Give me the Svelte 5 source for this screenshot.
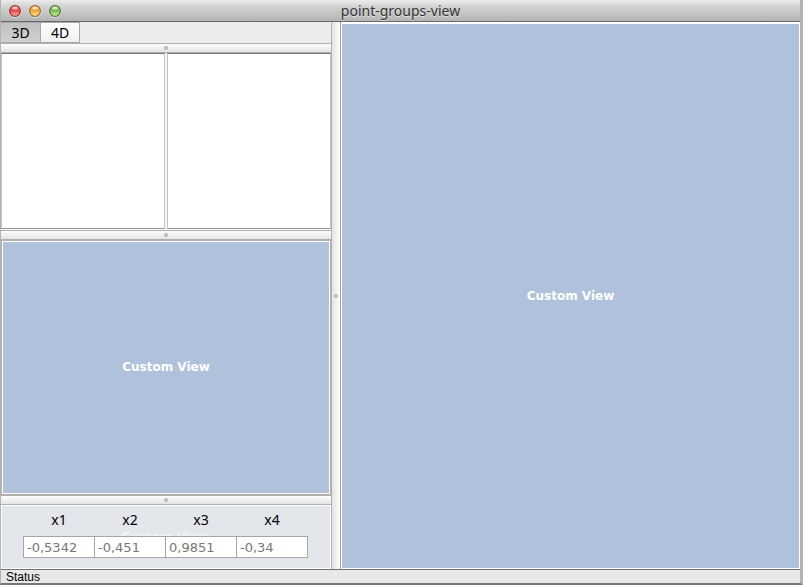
<script>
  let tab = $state('3D');
  const tabs = ['3D', '4D'];
  let coords = $state([
    { name: 'x1', value: '-0,5342' },
    { name: 'x2', value: '-0,451' },
    { name: 'x3', value: '0,9851' },
    { name: 'x4', value: '-0,34' }
  ]);
  const lights = [
    { name: 'Close', rim: '#8c3431', top: '#f58b8b', mid: '#e2484b', low: '#ffb0a8' },
    { name: 'Minimize', rim: '#93652a', top: '#f6c076', mid: '#eba23b', low: '#fff09a' },
    { name: 'Zoom', rim: '#4b7433', top: '#a9d28e', mid: '#78b857', low: '#d5f5ac' }
  ];
</script>

<div class="window">
  <header>
    <div class="lights">
      {#each lights as l, i}
        <button aria-label={l.name}>
          <svg width="14" height="14" viewBox="0 0 14 14">
            <defs>
              <linearGradient id="light{i}" x1="0" y1="0" x2="0" y2="1">
                <stop offset="0" stop-color={l.top} />
                <stop offset="0.45" stop-color={l.mid} />
                <stop offset="1" stop-color={l.low} />
              </linearGradient>
            </defs>
            <circle cx="7" cy="7.6" r="6" fill="none" stroke="#eee" stroke-opacity=".7" />
            <circle cx="7" cy="7" r="5.4" fill="url(#light{i})" stroke={l.rim} stroke-width="1.1" />
            <ellipse cx="7" cy="4" rx="2.8" ry="1.6" fill="#fff" fill-opacity=".6" />
          </svg>
        </button>
      {/each}
    </div>
    <h1>point-groups-view</h1>
  </header>

  <main>
    <section class="side">
      <nav>
        {#each tabs as t}
          <button class="tab" class:active={tab === t} aria-pressed={tab === t} onclick={() => (tab = t)}>{t}</button>
        {/each}
      </nav>
      <div class="bar"><i></i></div>
      <div class="lists">
        <div class="list"></div>
        <div class="gap"></div>
        <div class="list"></div>
      </div>
      <div class="bar"><i></i></div>
      <div class="custom small"><span>Custom View</span></div>
      <div class="bar"><i></i></div>
      <form>
        <span class="ghost" aria-hidden="true">Custom View</span>
        <div class="fields">
          {#each coords as c}
            <div class="field">
              <label for={c.name}>{c.name}</label>
              <input id={c.name} type="text" bind:value={c.value} />
            </div>
          {/each}
        </div>
      </form>
    </section>
    <div class="column"><i></i></div>
    <section class="custom large"><span>Custom View</span></section>
  </main>

  <footer>Status</footer>
</div>

<style>
  :global(body) {
    background: #777;
  }
  .window,
  .window * {
    box-sizing: border-box;
  }
  .window {
    display: flex;
    flex-direction: column;
    min-height: 100vh;
    border: solid #b3b3b3;
    border-width: 0 3px 0 1px;
    border-bottom: 2px solid #777;
    background: #ececec;
    font-family: 'DejaVu Sans', sans-serif;
    font-size: 13px;
    color: #000;
  }
  button {
    font: inherit;
    color: inherit;
  }
  header {
    display: grid;
    grid-template-columns: 1fr auto 1fr;
    align-items: center;
    height: 22px;
    border-bottom: 1px solid #696969;
    background: linear-gradient(#ececec, #d3d3d3 30%, #b4b4b4);
  }
  .lights {
    display: flex;
    gap: 6px;
    padding-left: 7px;
  }
  .lights button {
    display: block;
    width: 14px;
    height: 14px;
    padding: 0;
    border: 0;
    background: none;
  }
  .lights svg {
    display: block;
  }
  h1 {
    margin: 0;
    font: 14px/20px 'Noto Sans', sans-serif;
    color: #333;
    text-shadow: 0 1px 0 #e4e4e4;
  }
  main {
    flex: 1;
    display: grid;
    grid-template-columns: 330fr 10px 459fr;
  }
  .side {
    display: flex;
    flex-direction: column;
    min-width: 0;
  }
  nav {
    display: flex;
    height: 21px;
  }
  .tab {
    width: 39px;
    padding: 0;
    border: 1px solid #a9a9a9;
    border-left: 0;
    background: linear-gradient(#fff, #f0f0f0);
    font: 14px/19px 'Noto Sans', sans-serif;
  }
  .tab.active {
    width: 40px;
    background: linear-gradient(#c0c0c0, #d0d0d0);
  }
  .bar {
    display: flex;
    align-items: center;
    justify-content: center;
    height: 10px;
    border: solid #b0b0b0;
    border-width: 1px 0;
    background: linear-gradient(#fdfdfd, #e4e4e4);
  }
  .column {
    display: flex;
    align-items: center;
    justify-content: center;
    border-left: 1px solid #b0b0b0;
    border-right: 1px solid #a0a0a0;
    background: linear-gradient(90deg, #e4e4e4, #fdfdfd);
  }
  i {
    width: 4px;
    height: 4px;
    border: 1px solid #a8a8a8;
    border-radius: 50%;
    background: #d4d4d4;
  }
  .lists {
    flex: 177 1 0;
    display: flex;
    padding-bottom: 1px;
    background: #fff;
  }
  .list {
    flex: 1;
    border: 1px solid #909090;
    border-top-color: #777;
    border-left-color: #c4c4c4;
    border-right-color: #c4c4c4;
    background: #fff;
  }
  .gap {
    width: 2px;
    background: #f4f4f4;
  }
  .custom {
    display: flex;
    align-items: center;
    justify-content: center;
    background: #b0c1dc;
    color: #fff;
    font: bold 12px/16px 'DejaVu Sans', sans-serif;
  }
  .small {
    flex: 255 1 0;
    border: 1px solid #b0b0b0;
    outline: 1px solid #fff;
    outline-offset: -2px;
  }
  .large {
    border: 1px solid #fff;
    border-top-width: 2px;
  }
  form {
    position: relative;
    padding: 7px 22px 11px;
    border-right: 1px solid #b0b0b0;
    outline: 1px solid #fff;
    outline-offset: -1px;
    background: #e3e6eb;
  }
  .ghost {
    position: absolute;
    inset: 24px 0 auto;
    text-align: center;
    color: #f2f4f7;
    font: bold 12px/16px 'DejaVu Sans', sans-serif;
  }
  .fields {
    position: relative;
    display: flex;
  }
  .field {
    flex: 1;
    min-width: 0;
    display: flex;
    flex-direction: column;
    gap: 8px;
    text-align: center;
  }
  .field + .field {
    margin-left: -1px;
  }
  label {
    font: 14px/16px 'Noto Sans', sans-serif;
  }
  input {
    width: 100%;
    height: 22px;
    padding: 0 3px;
    border: 1px solid #a6a6a6;
    border-radius: 0;
    background: #fff;
    color: #777;
    font: 13px/20px 'DejaVu Sans', sans-serif;
  }
  footer {
    height: 14px;
    padding-left: 5px;
    border-top: 1px solid #707070;
    background: #e8e8e8;
    font: 12px/14px 'Liberation Sans', sans-serif;
  }
</style>
